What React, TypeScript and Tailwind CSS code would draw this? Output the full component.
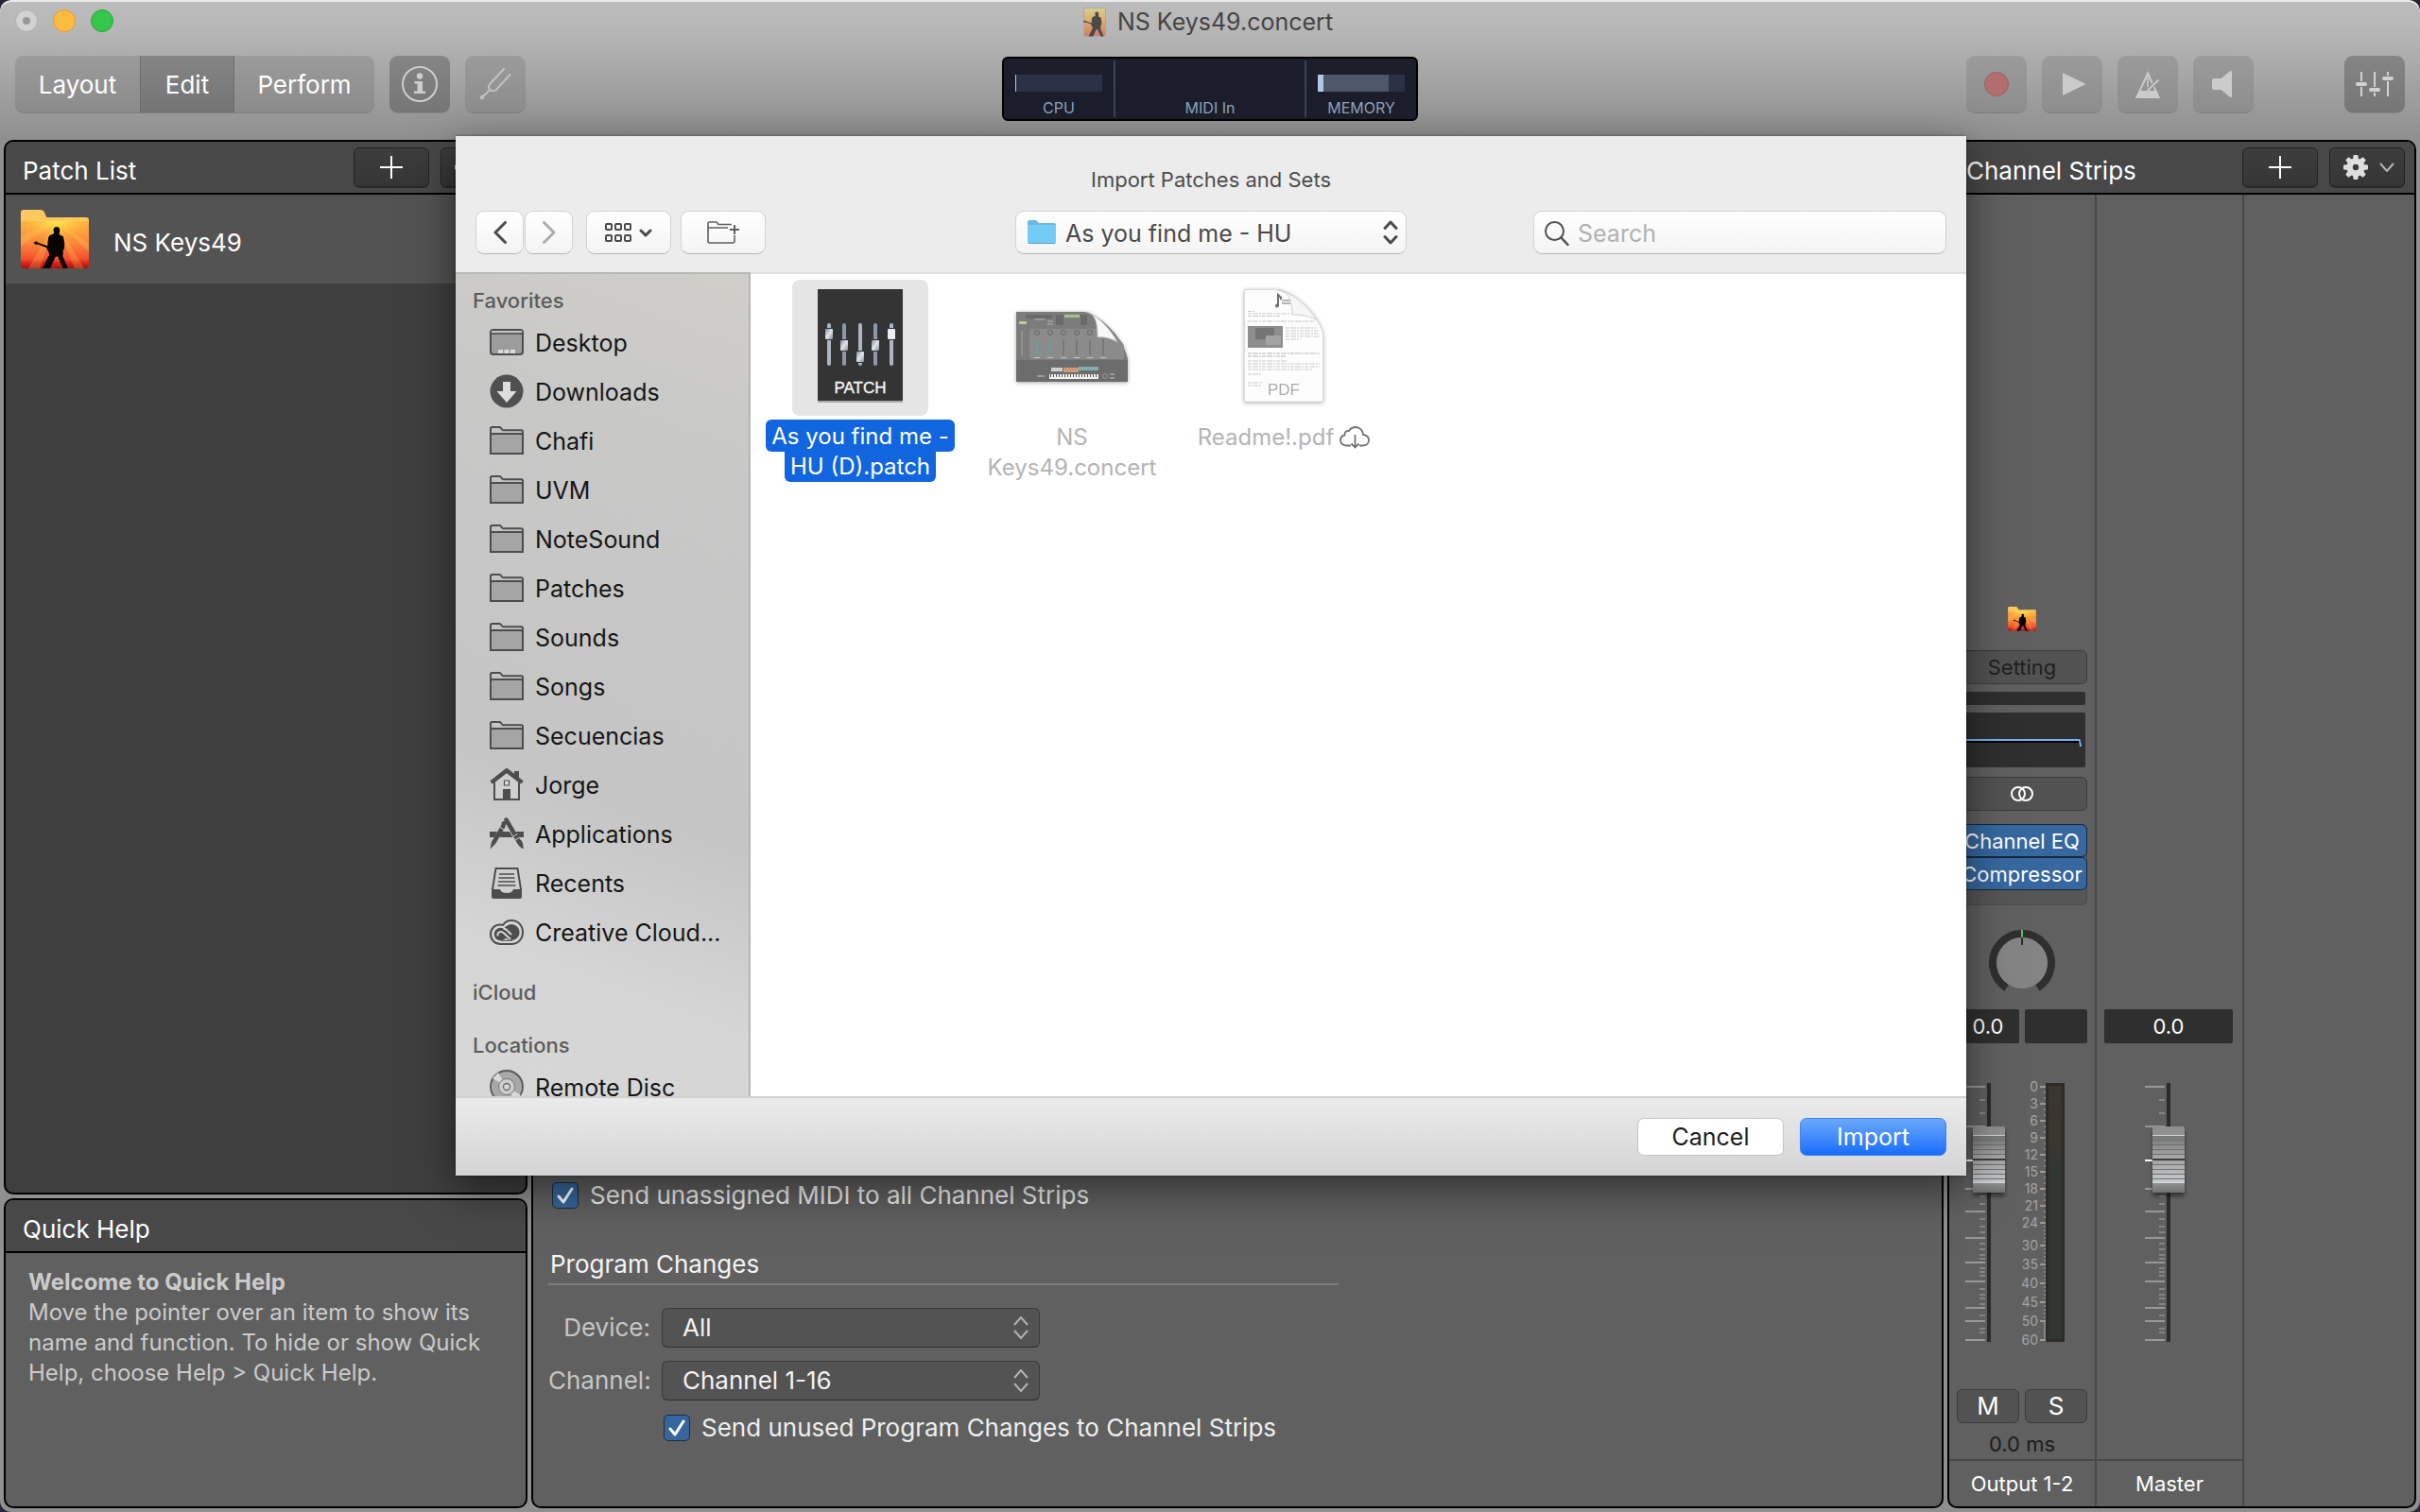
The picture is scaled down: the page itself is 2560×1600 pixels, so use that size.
import React from "react";

const SILHOUETTE =
  "M38 18c2.200 0 3.600 1.800 3.200 4.300l-.6 3.900 4.200 1.900 1.400 6.400-.2 6.200-1.400 3.100.3 3.200-.7 1.800 1 2.200L50 62h-5.200l-5.600-12.400h-2.400L31 62h-8l5.700-12 1.600-2-.8-3-1.200-2.500L27 40l-9-3.600-1.700.7-2.300-1.300.3-1.900 2.700-.3 1.700 1.300 9.600 3.300.3-5 .6-4.300 1.200-1.700 4.800-2.300-.6-3.400C34.200 19.800 35.700 18 38 18Z";

function ConcertFolder({ className }: { className: string }) {
  return (
    <svg viewBox="0 0 72 63" className={className} aria-hidden="true">
      <defs>
        <linearGradient id="sunset" x1="0" y1="0" x2="0" y2="1">
          <stop offset="0" stopColor="#fbb13c" />
          <stop offset=".45" stopColor="#fd8a3a" />
          <stop offset=".8" stopColor="#f4502c" />
          <stop offset=".88" stopColor="#d92a1c" />
          <stop offset="1" stopColor="#a80f0d" />
        </linearGradient>
        <radialGradient id="sun" cx=".52" cy="0" r=".6">
          <stop offset="0" stopColor="#fff04e" />
          <stop offset="1" stopColor="#fdb03c" stopOpacity="0" />
        </radialGradient>
      </defs>
      <path d="M0 3a3 3 0 0 1 3-3h18q3 0 4.500 4l1 2.500q.5 1.500 2 1.500H69a3 3 0 0 1 3 3v8H0Z" fill="#ffc95e" />
      <path d="M0 14q0-2 2-2h68q2 0 2 2v46q0 2-2 2H2q-2 0-2-2Z" fill="url(#sunset)" />
      <path d="M37 12 8 62h12L37 12l20 50h10L37 12 0 38V28l37-16 35 24v8Z" fill="#ffe06a" opacity=".22" />
      <path d="M0 12h72v34H0Z" fill="url(#sun)" />
      <path d={SILHOUETTE} fill="#080402" />
    </svg>
  );
}

function ConcertDocIcon() {
  return (
    <svg viewBox="0 0 24 31" className="h-[31px] w-6" aria-hidden="true">
      <defs>
        <linearGradient id="docSun" x1="0" y1="0" x2="0" y2="1">
          <stop offset="0" stopColor="#d8cf8e" />
          <stop offset=".5" stopColor="#dfa869" />
          <stop offset="1" stopColor="#d07c6c" />
        </linearGradient>
      </defs>
      <rect x=".5" y=".5" width="23" height="30" fill="url(#docSun)" stroke="#a9a9a9" />
      <path d={SILHOUETTE} fill="#4a4a48" transform="translate(-8 -6) scale(.59)" />
    </svg>
  );
}

function ToolButton({ label, active, children }: { label: string; active?: boolean; children: React.ReactNode }) {
  return (
    <button
      type="button"
      aria-label={label}
      aria-pressed={!!active}
      className={
        "flex h-[61px] w-16 items-center justify-center rounded-[9px] border-b " +
        (active
          ? "border-[#858585] bg-gradient-to-b from-[#858585] to-[#767676]"
          : "border-[#7e7e7e] bg-gradient-to-b from-[#9b9b9b] to-[#8d8d8d]")
      }
    >
      {children}
    </button>
  );
}

function PanelButton({ label, children }: { label: string; children: React.ReactNode }) {
  return (
    <button
      type="button"
      aria-label={label}
      className="flex h-[42px] w-20 shrink-0 items-center justify-center rounded-md border border-[#232323] bg-gradient-to-b from-[#3d3d3d] to-[#363636] shadow-[0_1px_0_#2c2c2c]"
    >
      {children}
    </button>
  );
}

const Plus = () => (
  <svg viewBox="0 0 24 24" className="size-6" stroke="#fff" strokeWidth="2" aria-hidden="true">
    <path d="M12 0v24M0 12h24" />
  </svg>
);

const GearMenu = () => (
  <span className="flex items-center gap-3 pl-1">
    <svg viewBox="0 0 26 26" className="size-[26px]" aria-hidden="true">
      <g fill="#dedede">
        {[0, 45, 90, 135].map((a) => (
          <path key={a} d="M10.800 0h4.400l1 5v16l-1 5h-4.400l-1-5V5Z" transform={`rotate(${a} 13 13)`} />
        ))}
        <circle cx="13" cy="13" r="9.500" />
      </g>
      <circle cx="13" cy="13" r="3.200" fill="#3a3a3a" />
    </svg>
    <svg viewBox="0 0 16 10" className="h-[10px] w-4" fill="none" stroke="#b5b5b5" strokeWidth="2" aria-hidden="true">
      <path d="m1 1 7 8 7-8" />
    </svg>
  </span>
);

function PanelHeader({ title, children }: { title: string; children?: React.ReactNode }) {
  return (
    <div className="flex h-14 shrink-0 items-center gap-3 border-b-2 border-black bg-[#484848] pl-[18px] pr-2.5">
      <h2 className="mt-[7px] flex-1 text-[26px] leading-8 text-white">{title}</h2>
      {children}
    </div>
  );
}

const panel = "flex flex-col overflow-hidden rounded-[10px] border-2 border-black";

function TopBar() {
  return (
    <header className="h-[148px] shrink-0">
      <div className="relative flex h-[46px] items-center justify-center gap-3 pr-1">
        <div className="absolute left-4 top-[10px] flex gap-4">
          <button type="button" aria-label="Close" className="flex size-6 items-center justify-center rounded-full border border-[#b0b0b0] bg-[#d2d2d2]">
            <span className="size-2 rounded-full bg-[#989898]" />
          </button>
          <button type="button" aria-label="Minimize" className="size-6 rounded-full border border-[#dfa032] bg-[#fdbc40]" />
          <button type="button" aria-label="Zoom" className="size-6 rounded-full border border-[#27a83a] bg-[#34c84a]" />
        </div>
        <ConcertDocIcon />
        <h1 className="text-[25px] leading-8 text-[#444]">NS Keys49.concert</h1>
      </div>
      <div className="relative flex items-start justify-between px-4 pt-[13px]">
        <div className="flex gap-4">
          <div className="flex h-[61px] overflow-hidden rounded-[9px] border-b border-[#7e7e7e] bg-gradient-to-b from-[#9b9b9b] to-[#8b8b8b] text-[26px] text-white">
            <button type="button" className="w-[132px]">Layout</button>
            <button type="button" aria-pressed="true" className="w-[100px] border-x border-[#6d6d6d] bg-gradient-to-b from-[#858585] to-[#747474]">Edit</button>
            <button type="button" className="w-[148px]">Perform</button>
          </div>
          <ToolButton label="Inspector" active>
            <svg viewBox="0 0 38 38" className="size-[38px]" aria-hidden="true">
              <circle cx="19" cy="19" r="18" fill="none" stroke="#cecece" strokeWidth="2" />
              <g fill="#cecece">
                <circle cx="19" cy="10.500" r="3.200" />
                <path d="M13.500 16h8.500v10.500h3V29H13v-2.500h3.500v-8h-3Z" />
              </g>
            </svg>
          </ToolButton>
          <ToolButton label="Tuner">
            <svg viewBox="0 0 34 34" className="size-[34px]" fill="none" stroke="#c2c2c2" strokeWidth="2" strokeLinecap="round" aria-hidden="true">
              <path d="M26 1 11.500 16.500q-3 4 0 6.500t6.500 0L32.500 7M11 23.500 4 30" />
              <circle cx="3" cy="31" r="2.200" fill="#c2c2c2" stroke="none" />
            </svg>
          </ToolButton>
        </div>
        <div className="flex">
          <div className="mr-24 flex gap-4">
            <ToolButton label="Record">
              <span className="size-[26px] rounded-full border border-[#9c6262] bg-[#b06e6e]" />
            </ToolButton>
            <ToolButton label="Play">
              <svg viewBox="0 0 24 24" className="ml-1 size-6" fill="#cbcbcb" aria-hidden="true"><path d="M0 1q0-1 1-.6l22.500 11q1 .6 0 1.200L1 23.600q-1 .4-1-.6Z" /></svg>
            </ToolButton>
            <ToolButton label="Metronome">
              <svg viewBox="0 0 26 29" className="h-[29px] w-[26px]" aria-hidden="true">
                <path d="M13 0 26 29H0Z" fill="#cbcbcb" />
                <path d="M13 6 5.500 21h15Z" fill="#949494" />
                <path d="M12.200 8h1.600v9h-1.600Z" fill="#cbcbcb" />
                <path d="M24.500 9.500 12.500 21" stroke="#949494" strokeWidth="4.500" />
                <path d="M24.500 9.500 12.500 21" stroke="#cbcbcb" strokeWidth="1.800" />
                <path d="M0 29 3.600 21h18.800L26 29Z" fill="#cbcbcb" />
              </svg>
            </ToolButton>
            <ToolButton label="Mute">
              <svg viewBox="0 0 21 28" className="mr-1 h-7 w-[21px]" fill="#cbcbcb" aria-hidden="true"><path d="M0 10q0-2 2-2h7.500L19 .3q2-1 2 1v25.400q0 2-2 1L9.500 20H2q-2 0-2-2Z" /></svg>
            </ToolButton>
          </div>
          <ToolButton label="Mixer" active>
            <svg viewBox="0 0 40 26" className="h-[26px] w-10" fill="#d2d2d2" aria-hidden="true">
              <path d="M5 0h2v10H5ZM5 16h2v10H5ZM19 0h2v16h-2ZM19 22h2v4h-2ZM33 0h2v4h-2ZM33 10h2v16h-2Z" />
              <rect y="11" width="12" height="4" rx="2" /><rect x="14" y="17" width="12" height="4" rx="2" /><rect x="28" y="5" width="12" height="4" rx="2" />
            </svg>
          </ToolButton>
        </div>
        <div className="absolute left-1/2 top-[14px] grid h-[68px] w-[440px] -translate-x-1/2 grid-cols-[116px_1fr_116px] rounded-md border-2 border-black bg-[#1c1e2c] py-0.5 text-[16px] leading-5 text-[#8ea4bd]">
          <div className="flex flex-col items-center pt-[15px]">
            <div className="h-[18px] w-[92px] border-l border-[#b0c9e2] bg-[#2c3245]" />
            <span className="mt-[7px]">CPU</span>
          </div>
          <div className="flex flex-col items-center justify-end border-x-2 border-[#36455a]">
            <span>MIDI In</span>
          </div>
          <div className="flex flex-col items-center pt-[15px]">
            <div className="flex h-[18px] w-[92px] bg-[#2c3245]">
              <div className="w-1.5 bg-[#b0c9e6]" />
              <div className="w-[69px] bg-[#4d5868]" />
            </div>
            <span className="mt-[7px]">MEMORY</span>
          </div>
        </div>
      </div>
    </header>
  );
}

function CheckRow({ label, className }: { label: string; className: string }) {
  return (
    <label className={"flex w-fit items-center gap-3 text-[26px] leading-8 text-[#eee] " + className}>
      <span className="grid size-7 place-items-center">
        <input type="checkbox" defaultChecked className="col-start-1 row-start-1 size-7 appearance-none rounded-[5px] border border-[#1d2c3c] bg-[#36669c]" />
        <svg viewBox="0 0 18 18" className="pointer-events-none col-start-1 row-start-1 size-[18px]" fill="none" stroke="#fff" strokeWidth="3" strokeLinecap="round" strokeLinejoin="round" aria-hidden="true">
          <path d="m2 10 5 6L16 2" />
        </svg>
      </span>
      {label}
    </label>
  );
}

function DarkSelect({ id, label, value }: { id: string; label: string; value: string }) {
  return (
    <>
      <label htmlFor={id} className="text-right text-[26px] leading-8 text-[#c6c6c6]">{label}</label>
      <div className="relative h-[42px] w-[400px]">
        <select id={id} className="size-full appearance-none rounded-md border border-[#3b3b3b] border-b-[#2c2c2c] bg-[#535353] pl-[21px] text-[26px] leading-8 text-[#f2f2f2]">
          <option>{value}</option>
        </select>
        <svg viewBox="0 0 16 24" className="pointer-events-none absolute right-3 top-[9px] h-6 w-4" fill="none" stroke="#b3b3b3" strokeWidth="2" aria-hidden="true">
          <path d="m1 9 7-8 7 8M1 15l7 8 7-8" />
        </svg>
      </div>
    </>
  );
}

function SettingsPanel() {
  return (
    <section className={panel + " justify-end bg-[#606060] pb-[67px] pl-4"}>
      <CheckRow label="Send unassigned MIDI to all Channel Strips" className="ml-1" />
      <h3 className="mt-[41px] w-[836px] border-b-2 border-[#7c7c7c] pb-1 pl-0.5 text-[26px] leading-8 text-[#f4f4f4]">Program Changes</h3>
      <div className="mt-6 grid w-fit grid-cols-[108px_1fr] items-center gap-x-3 gap-y-3.5">
        <DarkSelect id="device" label="Device:" value="All" />
        <DarkSelect id="channel" label="Channel:" value="Channel 1-16" />
      </div>
      <CheckRow label="Send unused Program Changes to Channel Strips" className="ml-[122px] mt-[13px]" />
    </section>
  );
}

const LONG = [87, 213, 411, 483, 567, 645, 705, 789, 831, 891];
const SHORT = [129, 171, 435, 459, 507, 531, 549, 585, 603, 621, 633, 663, 675, 687, 729, 747, 759, 777, 813, 855, 867];
const METER: [string, number][] = [["0", 87], ["3", 141], ["6", 195], ["9", 249], ["12", 303], ["15", 357], ["18", 411], ["21", 465], ["24", 519], ["30", 591], ["35", 651], ["40", 711], ["45", 771], ["50", 831], ["60", 891]];
const tickY = (v: number) => v / 3 - 27;

function minorTicks() {
  const out: number[] = [];
  METER.forEach(([, v], i) => {
    const next = METER[i + 1];
    if (!next) return;
    const n = i < 8 ? 3 : i === 8 ? 6 : i === 13 ? 10 : 5;
    for (let k = 1; k < n; k++) out.push(Math.round(tickY(v + ((next[1] - v) * k) / n)));
  });
  return out;
}

function Fader({ meter }: { meter?: boolean }) {
  return (
    <svg viewBox="0 0 110 280" className="h-[280px] w-[110px] overflow-visible" role="img" aria-label="Volume fader">
      <defs>
        <linearGradient id="capTop" x1="0" y1="0" x2="0" y2="1"><stop offset="0" stopColor="#8e8e8e" /><stop offset="1" stopColor="#acafb0" /></linearGradient>
        <linearGradient id="capUp" x1="0" y1="0" x2="0" y2="1"><stop offset="0" stopColor="#757777" /><stop offset="1" stopColor="#aaa9a9" /></linearGradient>
        <linearGradient id="capDown" x1="0" y1="0" x2="0" y2="1"><stop offset="0" stopColor="#a4a4a4" /><stop offset="1" stopColor="#c9cdd0" /></linearGradient>
        <linearGradient id="capEnd" x1="0" y1="0" x2="0" y2="1"><stop offset="0" stopColor="#8f9191" /><stop offset="1" stopColor="#707272" /></linearGradient>
        <linearGradient id="meterFill" x1="0" y1="0" x2="0" y2="1"><stop offset="0" stopColor="#3a3530" /><stop offset=".2" stopColor="#3a372e" /><stop offset=".34" stopColor="#303731" /><stop offset="1" stopColor="#303731" /></linearGradient>
        <filter id="capShadow" x="-30%" y="-10%" width="160%" height="130%"><feDropShadow dx="0" dy="4" stdDeviation="2" floodOpacity=".45" /></filter>
      </defs>
      {LONG.map((v) => <rect key={v} x="0" y={tickY(v) + 1} width="21" height="2" fill="#989898" />)}
      {SHORT.map((v) => <rect key={v} x="15" y={tickY(v) + 1} width="6" height="2" fill="#858585" />)}
      <rect y={tickY(321) + 1} width="21" height="2" fill="#fff" />
      <rect x="23" y="0" width="4" height="274" fill="#2b2b2b" />
      <g filter="url(#capShadow)">
        <rect x="8" y="46" width="34" height="70" rx="2" fill="url(#capTop)" />
        <rect x="8" y="56" width="34" height="24" fill="url(#capUp)" />
        <rect x="8" y="82" width="34" height="24" fill="url(#capDown)" />
        <path d="M8 106h34v8q0 2-2 2H10q-2 0-2-2Z" fill="url(#capEnd)" />
      </g>
      {[60, 65, 70, 75, 86, 91, 96, 101].map((y) => <rect key={y} x="8" y={y} width="34" height="1" fill="#6f7171" />)}
      <rect x="8" y="55" width="34" height="1" fill="#cfd5d5" />
      <rect x="8" y="80" width="34" height="2" fill="#3d3d3d" />
      <rect x="8" y="105" width="34" height="1" fill="#d8dede" />
      {meter && (
        <>
          {METER.map(([label, v]) => (
            <g key={label}>
              <rect x="79" y={tickY(v) + 1} width="6" height="2" fill="#9a9a9a" />
              <text x="77" y={tickY(v) + 7} textAnchor="end" fontSize="14" fill="#a4a4a4">{label}</text>
            </g>
          ))}
          {minorTicks().map((y) => <rect key={y} x="83" y={y + 1} width="2" height="2" fill="#848484" />)}
          <rect x="85" y="0" width="20" height="274" fill="#2e2b28" />
          <rect x="88" y="3" width="14" height="268" fill="url(#meterFill)" />
        </>
      )}
    </svg>
  );
}

const slotButton = "h-9 w-full rounded-md border border-[#3c3c3c] bg-[#525252]";
const dbBox = "flex h-9 flex-1 items-center justify-center rounded-[2px] bg-[#2f2f2f] text-[22px] leading-7 text-white";

function ChannelStrips() {
  return (
    <section className={panel + " bg-[#606060]"}>
      <PanelHeader title="Channel Strips">
        <PanelButton label="Add channel strip"><Plus /></PanelButton>
        <PanelButton label="Channel strip actions"><GearMenu /></PanelButton>
      </PanelHeader>
      <div className="flex flex-1 text-[22px]">
        <div className="flex w-[156px] flex-col justify-end border-r-2 border-[#484848]">
          <div className="flex flex-col items-center px-2">
            <ConcertFolder className="h-[26px] w-[30px]" />
            <button type="button" className={slotButton + " mt-5 leading-7 text-[#1f1f1f]"}>Setting</button>
            <div className="mt-2 h-3.5 w-[134px] rounded-[2px] bg-[#2f2f2f]" />
            <svg viewBox="0 0 134 58" className="mt-2 h-[58px] w-[134px] rounded-[2px] bg-[#2f2f2f]" fill="none" role="img" aria-label="EQ curve">
              <path d="M4 31h126" stroke="#000" strokeWidth="2" />
              <path d="M4 37q1-8 5-8h118.500q1 1 1.500 7" stroke="#74b4f6" strokeWidth="2" />
            </svg>
            <button type="button" aria-label="Stereo format" className={slotButton + " mt-2.5 flex items-center justify-center"}>
              <svg viewBox="0 0 24 16" className="h-4 w-6" fill="none" stroke="#fff" strokeWidth="2" aria-hidden="true"><circle cx="8" cy="8" r="7" /><circle cx="16" cy="8" r="7" /></svg>
            </button>
            <div className="mt-3.5 flex h-[86px] w-full flex-col rounded-md border border-t-0 border-[#4c4c4c] bg-[#565656] leading-7 text-white">
              <button type="button" className="-mx-px h-[35px] whitespace-nowrap rounded-md border border-[#16283c] bg-[#36689f]">Channel EQ</button>
              <button type="button" className="-mx-px h-[35px] whitespace-nowrap rounded-md border border-[#16283c] bg-[#36689f]">Compressor</button>
            </div>
            <svg viewBox="0 0 70 66" className="mt-[26px] h-[66px] w-[70px]" role="img" aria-label="Pan">
              <path d="M18.600 61.300A31 31 0 1 1 51.400 61.300" fill="none" stroke="#2f2f2f" strokeWidth="8" />
              <circle cx="35" cy="35" r="27" fill="#848484" />
              <path d="M35 8v8" stroke="#2f2f2f" strokeWidth="2" />
              <path d="M35 0v8" stroke="#4fc768" strokeWidth="2" />
            </svg>
            <div className="mt-[18px] flex w-full gap-1.5">
              <div className={dbBox}>0.0</div>
              <div className={dbBox} />
            </div>
          </div>
          <div className="mt-[42px] pl-[17px]"><Fader meter /></div>
          <div className="mt-11 flex gap-1.5 px-2 text-[26px] leading-8 text-white">
            <button type="button" className="h-9 flex-1 rounded-md border border-[#3c3c3c] bg-[#525252]">M</button>
            <button type="button" className="h-9 flex-1 rounded-md border border-[#3c3c3c] bg-[#525252]">S</button>
          </div>
          <div className="mt-2 h-[30px] text-center leading-7 text-[#1c1c1c]">0.0 ms</div>
          <div className="flex h-[50px] items-center justify-center border-t-2 border-[#484848] text-white">Output 1-2</div>
        </div>
        <div className="flex w-[156px] flex-col justify-end border-r-2 border-[#484848]">
          <div className="flex pl-2 pr-2.5"><div className={dbBox}>0.0</div></div>
          <div className="mt-[42px] pl-[51px]"><Fader /></div>
          <div className="mt-[118px] flex h-[50px] items-center justify-center border-t-2 border-[#484848] text-white">Master</div>
        </div>
      </div>
    </section>
  );
}

const ink = "#4d4d4d";

const FolderGlyph = () => (
  <svg viewBox="0 0 36 30" className="h-[30px] w-9" aria-hidden="true">
    <path d="M1 27.500V2.500Q1 1 2.500 1h8q1 0 1.700 1.200l.8 1.300q.5.700 1.500.7h19q1.500 0 1.500 1.500V28q0 1-1 1H2q-1 0-1-1.500Z" fill="#c4c4c4" stroke={ink} strokeWidth="2" />
    <path d="M1 10q0-2 2-2h30q2 0 2 2v19H1Z" fill="#a5a5a5" stroke={ink} strokeWidth="2" />
  </svg>
);

const DesktopGlyph = () => (
  <svg viewBox="0 0 36 28" className="h-7 w-9" aria-hidden="true">
    <rect x="1" y="1" width="34" height="26" rx="3" fill="#9c9c9c" stroke={ink} strokeWidth="2" />
    <path d="M2 2h32v2H2Z" fill="#c4c4c4" />
    <path d="M1 5h34" stroke={ink} strokeWidth="1.500" />
    <path d="M9 22h5v4H9ZM15.500 22h5v4h-5ZM22 22h5v4h-5Z" fill="#dcdcdc" />
  </svg>
);

const DownloadGlyph = () => (
  <svg viewBox="0 0 36 36" className="size-9" aria-hidden="true">
    <circle cx="18" cy="18" r="17.500" fill="#505050" />
    <path d="M14 8h8v10h6.500L18 30 7.500 18H14Z" fill="#dedede" />
  </svg>
);

const HomeGlyph = () => (
  <svg viewBox="0 0 36 34" className="h-[34px] w-9" aria-hidden="true">
    <path d="M5 14v19h26V14L18 4Z" fill="#cfcfcf" stroke={ink} strokeWidth="2" />
    <path d="M26 3h5v9l-5-4Z" fill={ink} />
    <path d="M1.500 15 18 2l16.500 13" fill="none" stroke={ink} strokeWidth="4" />
    <path d="M15.500 13h5v5h-5Z" fill="#dcdcdc" stroke={ink} strokeWidth="1.200" />
    <path d="M14 22h8v11h-8Z" fill={ink} />
  </svg>
);

const AppsGlyph = () => (
  <svg viewBox="0 0 36 34" className="h-[34px] w-9" aria-hidden="true">
    <path d="M0 15h8l-3 6H0ZM13 15h8l3.500 6H10ZM27 15h9v6h-6Z" fill={ink} />
    <path d="M15 8 4 27" stroke={ink} strokeWidth="4.500" />
    <path d="M2 25.500 6 28 .5 33.500Z" fill={ink} />
    <circle cx="15" cy="6.500" r="2.500" fill={ink} />
    <path d="M17.500 2.500 30.500 25" stroke={ink} strokeWidth="4.500" strokeLinecap="round" />
    <path d="M28.500 26 33 23.500q3 4 2.500 10-5-2.500-7-7.500Z" fill={ink} />
    <path d="m25 20 4.500-2.500M27 24l5-3M11 10.500l5 3" stroke="#cacaca" />
  </svg>
);

const RecentsGlyph = () => (
  <svg viewBox="0 0 36 33" className="h-[33px] w-9" aria-hidden="true">
    <path d="M6.500 1h23L33 23v8q0 1-1 1H4q-1 0-1-1v-8Z" fill="#cfcfcf" stroke={ink} strokeWidth="2" />
    <path d="M3 23h8q1 4 7 4t7-4h8v8q0 1-1 1H4q-1 0-1-1Z" fill={ink} />
    <path d="M10 7h16M9.500 11h17M9 15h18M8.500 19h19" stroke={ink} strokeWidth="1.500" />
  </svg>
);

const CloudGlyph = () => (
  <svg viewBox="0 0 36 27" className="h-[27px] w-9" fill="none" aria-hidden="true">
    <path d="M11.500 26C5.500 26 1 21.500 1 15.500S5.500 5.500 11 5.500c1 0 2 .1 3 .4C16 3 19 1 23 1c7 0 12 5.500 12 12.500S30 26 23 26Z" fill="#d6d6d6" stroke={ink} strokeWidth="2" />
    <circle cx="23" cy="13.500" r="8.600" fill={ink} />
    <circle cx="11.500" cy="15.500" r="6.800" fill={ink} />
    <path d="M12 22.300h12" stroke={ink} />
    <path d="M8.500 17.500q-.5-4.500 3.500-4.500 1.500 0 3 1.500l7 6.500M14.500 9.500q3 .5 5 3l3.500 3.500" stroke="#d6d6d6" strokeWidth="2" />
  </svg>
);

const DiscGlyph = () => (
  <svg viewBox="0 0 36 36" className="size-9" aria-hidden="true">
    <circle cx="18" cy="18" r="17" fill="#a8a8a8" stroke="#5c5c5c" strokeWidth="2" />
    <path d="M18 18 3 9l6-6ZM18 18l15 9-6 6Z" fill="#d9d9d9" />
    <circle cx="18" cy="18" r="8.500" fill="#cecece" stroke="#777" />
    <circle cx="18" cy="18" r="3.500" fill="#d8d8d8" stroke="#666" strokeWidth="1.300" />
  </svg>
);

const FAVORITES: [string, () => React.ReactElement][] = [
  ["Desktop", DesktopGlyph], ["Downloads", DownloadGlyph], ["Chafi", FolderGlyph], ["UVM", FolderGlyph], ["NoteSound", FolderGlyph],
  ["Patches", FolderGlyph], ["Sounds", FolderGlyph], ["Songs", FolderGlyph], ["Secuencias", FolderGlyph], ["Jorge", HomeGlyph],
  ["Applications", AppsGlyph], ["Recents", RecentsGlyph], ["Creative Cloud...", CloudGlyph],
];

function SideItem({ label, Icon }: { label: string; Icon: () => React.ReactElement }) {
  return (
    <li>
      <a href="#" className="flex h-[52px] items-center gap-3 pl-9 text-[25px] leading-8 text-[#161616]">
        <Icon />
        <span className="mt-0.5">{label}</span>
      </a>
    </li>
  );
}

const sideHeading = "flex h-9 items-center pl-[18px] text-[22px] font-medium leading-7 text-[#5c5c5c]";

function PatchIcon() {
  const caps: [number, number][] = [[12, 42], [28, 54], [45, 66], [61, 54], [78, 42]];
  return (
    <svg viewBox="0 0 90 120" className="h-[120px] w-[90px]" aria-hidden="true">
      <defs><linearGradient id="steel" x1="0" y1="0" x2="1" y2="1"><stop offset="0" stopColor="#7c8b99" /><stop offset=".5" stopColor="#dfe7ed" /><stop offset="1" stopColor="#7f8f9e" /></linearGradient></defs>
      <path d="M0 2h90v118H0Z" fill="#a9a9a9" />
      <path d="M0 0h90v118H0Z" fill="#343434" />
      {caps.map(([x, y], i) => (
        <g key={x}>
          <rect x={x - 2} y="36" width="4" height="45" rx="2" fill={i % 2 ? "#8a9aa8" : "#a9b7c3"} />
          <rect x={x - 5} y={y - 1} width="10" height="13" fill="#343434" />
          <rect x={x - 4} y={y} width="8" height="11" rx="1" fill={i === 4 ? "#e9edf0" : "url(#steel)"} />
        </g>
      ))}
      <text x="45" y="110" textAnchor="middle" fontSize="17" fill="#f2f2f2" stroke="#f2f2f2" strokeWidth=".4" fontFamily="Liberation Sans, Arial, sans-serif">PATCH</text>
    </svg>
  );
}

function ConcertThumb() {
  return (
    <svg viewBox="0 0 118 76" className="h-[76px] w-[118px] drop-shadow-[0_1px_2px_rgba(0,0,0,0.35)]" aria-hidden="true">
      <path d="M0 0h72c12 2 40 22 46 50v24H0Z" fill="#7c7c7c" />
      <path d="M14 18h74q22 8 26 18v14H14Z" fill="#8b8b8b" />
      <path d="M10 3h28v4H10ZM42 3h8v11h-8ZM68 3h7v11h-7Z" fill="#6a6a6a" />
      <rect x="51" y="3" width="16" height="3" fill="#a2c48c" />
      <rect x="3" y="10" width="8" height="3" rx="1" fill="#c9c7a2" />
      <path d="M6 20v26" stroke="#a3ab8c" />
      {[22, 36, 50, 64, 78, 92].map((x, i) => (
        <g key={x}>
          <circle cx={x} cy="22" r="2.500" fill="none" stroke="#666" />
          <path d={`M${x} 29v17`} stroke={i < 2 ? "#68a0a0" : "#727272"} strokeWidth="1.500" />
          <path d={`M${x - 3} 48.500h6`} stroke="#c4c4c4" />
        </g>
      ))}
      <path d="M20 8h10M33 10h6M33 13h6" stroke="#b5b5b5" />
      <path d="M0 51h118v23H0Z" fill="#6c6c6c" />
      <rect x="37" y="59" width="12" height="4" fill="#d0d0d0" />
      <rect x="50" y="59" width="16" height="5" fill="#d09a74" />
      <rect x="66" y="58" width="21" height="4" fill="#7db0b0" />
      <rect x="35" y="66" width="52" height="5" fill="#f2f2f2" />
      <path d="M36 67.500h50" stroke="#555" strokeDasharray="1 2" strokeWidth="3" />
      <path d="M22 68h8M99 66h5M99 70h5" stroke="#9a9a9a" strokeWidth="2" />
      <circle cx="94" cy="68" r="2.500" fill="none" stroke="#999" />
      <path d="M74 0c10 2 12 12 12 27 6-1 15 1 21 5C100 18 86 4 74 0Z" fill="#f8f8f8" stroke="#bdbdbd" strokeWidth=".8" />
    </svg>
  );
}

function PdfThumb() {
  return (
    <svg viewBox="0 0 84 120" className="h-[120px] w-[84px] drop-shadow-[0_1px_2px_rgba(0,0,0,0.3)]" aria-hidden="true">
      <path d="M.5.5H34C52 1 83 30 83.500 50v69H.5Z" fill="#fdfdfd" stroke="#dadada" />
      <path d="M36 18V6l3 3v2" fill="none" stroke="#6f6f6f" strokeWidth="2" />
      <circle cx="35" cy="17.500" r="2" fill="#6f6f6f" />
      <path d="M40 12h9M40 15h9" stroke="#b5b5b5" strokeWidth="2" />
      <rect x="4" y="39" width="37" height="23" fill="#8e8e8e" />
      <rect x="12" y="41" width="20" height="12" fill="#747474" />
      <rect x="23" y="49" width="16" height="10" fill="#a3a3a3" />
      <g stroke="#c9c9c9" strokeDasharray="4 1 6 1 2 1">
        <path d="M4 23.500h7M4 26h46M4 28.500h34M4 34h70M44 41h32M44 44h34M44 47h34M44 50h36M44 53h16M4 76h42M4 79h76M4 82h76M4 85h68M4 90h14M4 99h16M4 102h14" />
        <path d="M4 68h76M4 71h40" stroke="#b5b5b5" />
      </g>
      <text x="42" y="112" textAnchor="middle" fontSize="17" fill="#ababab" fontFamily="Liberation Sans, Arial, sans-serif">PDF</text>
      <path d="M36 .8C48 3 51 13 51 27c10 0 18 1 26 6C68 18 52 4 36 .8Z" fill="#f6f6f6" stroke="#cfcfcf" />
    </svg>
  );
}

const lightButton = "flex h-[46px] items-center justify-center rounded-[9px] border border-[#d3d3d3] border-b-[#b4b4b4] bg-gradient-to-b from-white to-[#f4f4f4]";

function ImportSheet() {
  return (
    <div className="absolute inset-x-0 top-[144px] flex justify-center pl-0.5">
      <div role="dialog" aria-label="Import Patches and Sets" className="flex w-full max-w-[1598px] flex-col bg-[#ececec] shadow-[0_14px_44px_rgba(0,0,0,0.5),0_0_3px_rgba(0,0,0,0.4)]">
        <div className="px-[21px] pb-[19px] pt-8">
          <h2 className="text-center text-[22px] leading-7 text-[#4c4c4c]">Import Patches and Sets</h2>
          <div className="mt-[19px] grid grid-cols-[1fr_414px_1fr] items-center">
            <div className="flex">
              <button type="button" aria-label="Back" className={lightButton + " w-[51px]"}>
                <svg viewBox="0 0 14 24" className="h-6 w-3.5" fill="none" stroke="#4b4b4b" strokeWidth="3" strokeLinecap="round" strokeLinejoin="round" aria-hidden="true"><path d="M12.500 1.500 2 12l10.500 10.500" /></svg>
              </button>
              <button type="button" aria-label="Forward" className={lightButton + " ml-px w-[51px]"}>
                <svg viewBox="0 0 14 24" className="h-6 w-3.5" fill="none" stroke="#adadad" strokeWidth="3" strokeLinecap="round" strokeLinejoin="round" aria-hidden="true"><path d="M1.500 1.500 12 12 1.500 22.500" /></svg>
              </button>
              <button type="button" aria-label="View options" className={lightButton + " ml-3.5 w-[90px] gap-2"}>
                <svg viewBox="0 0 28 20" className="h-5 w-7" fill="none" stroke="#4b4b4b" strokeWidth="2" aria-hidden="true">
                  {[1, 11, 21].map((x) => <g key={x}><rect x={x} y="1" width="6" height="6" rx="1" /><rect x={x} y="13" width="6" height="6" rx="1" /></g>)}
                </svg>
                <svg viewBox="0 0 14 9" className="h-[9px] w-3.5" fill="none" stroke="#4b4b4b" strokeWidth="3" strokeLinecap="round" strokeLinejoin="round" aria-hidden="true"><path d="m2 2 5 5 5-5" /></svg>
              </button>
              <button type="button" aria-label="New folder" className={lightButton + " ml-2.5 w-[90px]"}>
                <svg viewBox="0 0 34 24" className="h-6 w-[34px]" fill="none" stroke="#5f5f5f" strokeWidth="1.600" aria-hidden="true">
                  <path d="M26 3.500H12L10 1H2.500Q1 1 1 2.500V21.500Q1 23 2.500 23h25q1.500 0 1.500-1.500V15M1 9q0-2 2-2h19" />
                  <path d="M29 4v10M24 9h10" strokeWidth="2" />
                </svg>
              </button>
            </div>
            <div className="relative h-[46px]">
              <svg viewBox="0 0 30 26" className="pointer-events-none absolute left-[13px] top-[10px] h-[26px] w-[30px]" aria-hidden="true">
                <path d="M0 2q0-2 2-2h7l3 3h16q2 0 2 2v19H0Z" fill="#6ab8e0" />
                <path d="M0 5h30v18q0 2-2 2H2q-2 0-2-2Z" fill="#74ccf6" />
                <path d="M1 24.500h28" stroke="#4fa6d6" />
              </svg>
              <select aria-label="Location" className="size-full appearance-none rounded-[9px] border border-[#d3d3d3] border-b-[#b4b4b4] bg-gradient-to-b from-white to-[#f4f4f4] pl-[52px] pt-0.5 text-[25px] leading-8 text-[#4a4a4a]">
                <option>As you find me - HU</option>
              </select>
              <svg viewBox="0 0 16 26" className="pointer-events-none absolute right-[9px] top-[10px] h-[26px] w-4" fill="none" stroke="#4b4b4b" strokeWidth="3" strokeLinecap="round" strokeLinejoin="round" aria-hidden="true"><path d="m2 8.500 6-6.500 6 6.500M2 17.500l6 6.500 6-6.500" /></svg>
            </div>
            <div className="relative h-[46px] w-[437px] justify-self-end">
              <svg viewBox="0 0 26 26" className="pointer-events-none absolute left-3 top-[11px] size-[26px]" fill="none" stroke="#4f4f4f" strokeWidth="2" strokeLinecap="round" aria-hidden="true"><circle cx="10.500" cy="10.500" r="9.500" /><path d="m17.500 17.500 7 7.500" strokeWidth="2.500" /></svg>
              <input type="search" aria-label="Search" placeholder="Search" className="size-full rounded-[9px] border border-[#d3d3d3] border-b-[#b4b4b4] bg-gradient-to-b from-white to-[#f4f4f4] pl-[46px] pt-0.5 text-[25px] leading-8 placeholder:text-[#b2b2b2]" />
            </div>
          </div>
        </div>
        <div className="flex h-[872px]">
          <nav aria-label="Places" className="w-[312px] shrink-0 overflow-hidden border-r-2 border-t-2 border-r-[#b5b5b5] border-t-[#b8b8b6] bg-[linear-gradient(200deg,#d0cec9_0%,#c8c8c7_22%,#c5c5c5_62%,#d5d5d5_82%,#d7d7d7_100%)]">
            <h3 className={sideHeading + " mt-2.5"}>Favorites</h3>
            <ul>{FAVORITES.map(([l, I]) => <SideItem key={l} label={l} Icon={I} />)}</ul>
            <h3 className={sideHeading + " mt-5"}>iCloud</h3>
            <h3 className={sideHeading + " mt-5"}>Locations</h3>
            <ul><SideItem label="Remote Disc" Icon={DiscGlyph} /></ul>
          </nav>
          <ul className="grid flex-1 auto-rows-min grid-cols-[repeat(auto-fill,224px)] border-t-2 border-[#e0e0e0] bg-white pl-1 pt-1.5 text-center text-[24px] leading-8 text-[#b4b4b4]">
            <li className="flex flex-col items-center">
              <div className="flex size-36 items-center justify-center rounded-lg bg-[#e5e5e5] pb-1"><PatchIcon /></div>
              <span className="mt-1 h-[34px] whitespace-nowrap rounded-md bg-[#1166df] px-1.5 leading-9 text-white">As you find me -</span>
              <span className="h-8 whitespace-nowrap rounded-b-md bg-[#1166df] px-1.5 text-white">HU (D).patch</span>
            </li>
            <li className="flex flex-col items-center">
              <div className="flex size-36 items-center justify-center"><ConcertThumb /></div>
              <span className="mt-[7px] w-48">NS Keys49.concert</span>
            </li>
            <li className="flex flex-col items-center">
              <div className="flex size-36 items-center justify-center pb-1"><PdfThumb /></div>
              <span className="mt-[7px] flex items-center gap-1.5">
                Readme!.pdf
                <svg viewBox="0 0 32 24" className="h-6 w-8" fill="none" stroke="#757575" strokeWidth="1.800" aria-hidden="true">
                  <path d="M12 20.500H7.500C4 20.500 1 18.500 1 15c0-3 2-5 4.500-5.500C5 7 7 4.500 10 5c1.500-2.500 4-4 7-4 4.500 0 8 3.500 8 8 3.500.5 6 2.500 6 5.800 0 3.500-2.700 5.700-6 5.700h-4" />
                  <path d="M16.500 9v13.500m-4-4 4 4 4-4" />
                </svg>
              </span>
            </li>
          </ul>
        </div>
        <div className="flex h-[84px] items-center justify-end gap-[17px] border-t-2 border-[#d0d0d0] bg-gradient-to-b from-[#ebebeb] to-[#d4d4d4] pr-[21px] text-[25px] leading-8">
          <button type="button" className="h-10 w-[155px] rounded-[7px] border border-[#c4c4c4] bg-white text-[#1d1d1d]">Cancel</button>
          <button type="button" className="h-10 w-[155px] rounded-[7px] border border-[#3c84ee] bg-gradient-to-b from-[#6aa8fa] to-[#156cfc] text-white">Import</button>
        </div>
      </div>
    </div>
  );
}

export default function App() {
  return (
    <div className="min-h-screen bg-[#2b2438] font-['Inter',sans-serif]">
      <div className="relative flex min-h-screen flex-col rounded-xl bg-[#8f8f8f] bg-[linear-gradient(#bcbcbc_0px,#b8b8b8_26px,#8f8f8f_148px)] shadow-[inset_0_2px_0_#ececec]">
        <TopBar />
        <main className="grid flex-1 grid-cols-[554px_1fr_496px] gap-1 px-1 pb-1">
          <div className="flex flex-col gap-1">
            <section className={panel + " flex-1 bg-[#3f3f3f]"}>
              <PanelHeader title="Patch List">
                <PanelButton label="Add patch"><Plus /></PanelButton>
                <PanelButton label="Patch actions"><GearMenu /></PanelButton>
              </PanelHeader>
              <div className="flex h-[94px] items-center bg-[#535353] pl-4">
                <ConcertFolder className="h-[63px] w-[72px]" />
                <span className="ml-[26px] mt-[7px] text-[26px] leading-8 text-white">NS Keys49</span>
              </div>
            </section>
            <section className={panel + " h-[328px] bg-[#606060]"}>
              <PanelHeader title="Quick Help" />
              <div className="px-6 pt-[15px] text-[24px] leading-8 text-[#cbcbcb]">
                <p className="font-bold">Welcome to Quick Help</p>
                <p>Move the pointer over an item to show its name and function. To hide or show Quick Help, choose Help &gt; Quick Help.</p>
              </div>
            </section>
          </div>
          <SettingsPanel />
          <ChannelStrips />
        </main>
        <ImportSheet />
      </div>
    </div>
  );
}
